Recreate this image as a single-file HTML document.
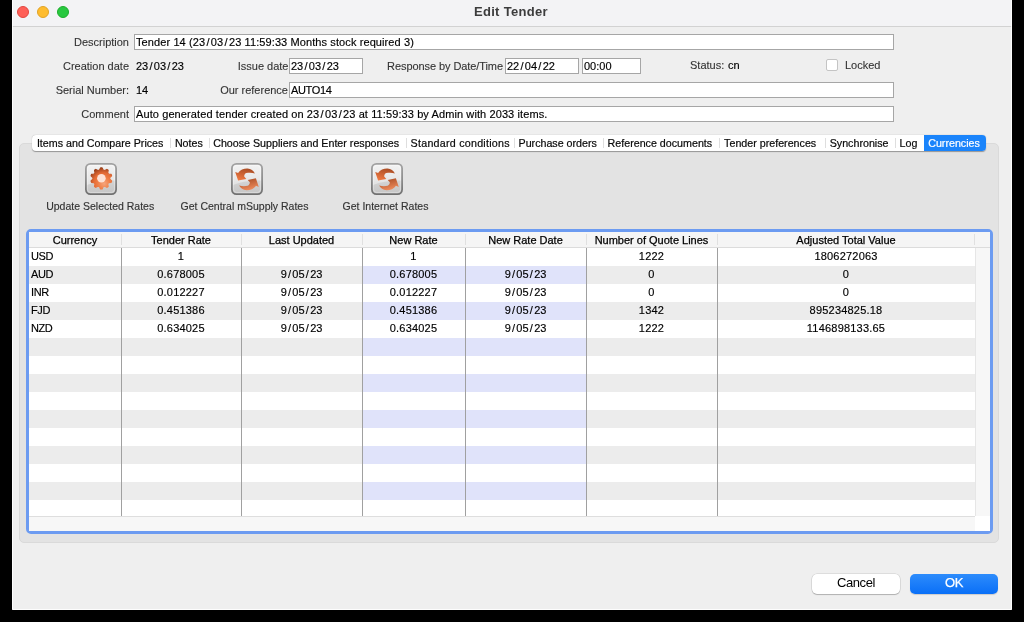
<!DOCTYPE html>
<html><head><meta charset="utf-8">
<style>
html,body{margin:0;padding:0;width:1024px;height:622px;overflow:hidden;background:#000;}
*{box-sizing:border-box;}
body{font-family:"Liberation Sans",sans-serif;font-size:11px;color:#000;position:relative;}
.a{position:absolute;white-space:nowrap;}
#win{position:absolute;left:12px;top:0;width:1000px;height:610px;background:#efefef;border-radius:0 0 1px 1px;}
#title{position:absolute;left:12px;top:0;width:1000px;height:27px;background:#f3f3f5;border-bottom:1px solid #d2d2d2;}
.dot{position:absolute;top:6px;width:12px;height:12px;border-radius:50%;}
.lbl{position:absolute;white-space:nowrap;color:#333;line-height:14px;-webkit-text-stroke:0.1px #333;}
.inp{position:absolute;height:16px;background:#fff;border:1px solid #a6a6a6;}
.itx{position:absolute;white-space:nowrap;color:#000;line-height:14px;-webkit-text-stroke:0.15px #000;}
.sep{position:absolute;top:138px;width:1px;height:10px;background:#dedede;}
.tt{position:absolute;white-space:nowrap;top:136px;line-height:14px;color:#1a1a1a;font-size:10.7px;-webkit-text-stroke:0.2px currentColor;}
.row{position:absolute;left:29px;width:946px;height:18px;}
.vl{position:absolute;top:248px;width:1px;height:268px;background:#a0a0a0;}
.hs{position:absolute;top:234px;width:1px;height:11px;background:#e0e0e0;}
.hd{position:absolute;top:233px;line-height:14px;color:#000;white-space:nowrap;-webkit-text-stroke:0.25px #000;}
.cell{position:absolute;line-height:14px;color:#000;white-space:nowrap;-webkit-text-stroke:0.15px #000;}
.btn{position:absolute;width:32px;height:32px;border-radius:4px;}
.bl{position:absolute;top:199px;line-height:14px;color:#333;white-space:nowrap;font-size:10.5px;-webkit-text-stroke:0.15px #333;}
</style></head>
<body>
<div id="wrap" style="position:absolute;left:0;top:0;width:1024px;height:622px;will-change:transform;">
<div id="win"></div>
<div id="title"></div>
<div class="dot" style="left:17px;background:#fe5f57;border:1px solid #e2463f;"></div>
<div class="dot" style="left:37px;background:#febc2e;border:1px solid #e1a325;"></div>
<div class="dot" style="left:57px;background:#28c840;border:1px solid #1dad2b;"></div>
<div class="a" style="left:474px;top:4px;font-size:13px;line-height:15px;font-weight:bold;color:#3c3c3c;letter-spacing:0.3px;">Edit Tender</div>
<div class="lbl" style="right:895px;top:35px;">Description</div>
<div class="inp" style="left:134px;top:34px;width:760px;height:16px;"></div>
<div class="itx" style="left:136px;top:35px;letter-spacing:0.1px;">Tender 14 (23<span style="margin:0 1.25px">/</span>03<span style="margin:0 1.25px">/</span>23 11:59:33 Months stock required 3)</div>
<div class="lbl" style="right:895px;top:59px;">Creation date</div>
<div class="itx" style="left:136px;top:59px;">23<span style="margin:0 1.25px">/</span>03<span style="margin:0 1.25px">/</span>23</div>
<div class="lbl" style="right:735.5px;top:59px;">Issue date</div>
<div class="inp" style="left:289px;top:58px;width:74px;height:16px;"></div>
<div class="itx" style="left:291px;top:59px;">23<span style="margin:0 1.25px">/</span>03<span style="margin:0 1.25px">/</span>23</div>
<div class="lbl" style="right:521px;top:59px;letter-spacing:-0.08px;">Response by Date/Time</div>
<div class="inp" style="left:505px;top:58px;width:74px;height:16px;"></div>
<div class="itx" style="left:507px;top:59px;">22<span style="margin:0 1.25px">/</span>04<span style="margin:0 1.25px">/</span>22</div>
<div class="inp" style="left:582px;top:58px;width:59px;height:16px;"></div>
<div class="itx" style="left:584px;top:59px;">00:00</div>
<div class="lbl" style="left:690px;top:58px;">Status:</div>
<div class="itx" style="left:728px;top:58px;">cn</div>
<div class="a" style="left:826px;top:59px;width:12px;height:12px;background:#fff;border:1px solid #c4c4c4;border-radius:2px;"></div>
<div class="lbl" style="left:845px;top:58px;">Locked</div>
<div class="lbl" style="right:895px;top:83px;">Serial Number:</div>
<div class="itx" style="left:136px;top:83px;">14</div>
<div class="lbl" style="right:736px;top:83px;">Our reference</div>
<div class="inp" style="left:289px;top:82px;width:605px;height:16px;"></div>
<div class="itx" style="left:291px;top:83px;letter-spacing:-0.35px;">AUTO14</div>
<div class="lbl" style="right:895px;top:107px;">Comment</div>
<div class="inp" style="left:134px;top:106px;width:760px;height:16px;"></div>
<div class="itx" style="left:136px;top:107px;letter-spacing:0.1px;">Auto generated tender created on 23<span style="margin:0 1.25px">/</span>03<span style="margin:0 1.25px">/</span>23 at 11:59:33 by Admin with 2033 items.</div>
<div class="a" style="left:19px;top:143px;width:980px;height:400px;background:#e3e3e3;border:1px solid #dadada;border-radius:5px;"></div>
<div class="a" style="left:32px;top:135px;width:954px;height:16px;background:#fff;border-radius:4px;box-shadow:0 0.5px 1px rgba(0,0,0,0.35);"></div>
<div class="a" style="left:924px;top:135px;width:62px;height:16px;background:#1a84fb;border-radius:0 4px 4px 0;"></div>
<div class="tt" style="left:36.9px;color:#0a0a0a;">Items and Compare Prices</div>
<div class="sep" style="left:170px;"></div>
<div class="tt" style="left:174.9px;color:#0a0a0a;">Notes</div>
<div class="sep" style="left:209px;"></div>
<div class="tt" style="left:213.2px;color:#0a0a0a;">Choose Suppliers and Enter responses</div>
<div class="sep" style="left:406px;"></div>
<div class="tt" style="left:410.6px;color:#0a0a0a;letter-spacing:0.25px;">Standard conditions</div>
<div class="sep" style="left:514px;"></div>
<div class="tt" style="left:518.5px;color:#0a0a0a;">Purchase orders</div>
<div class="sep" style="left:603px;"></div>
<div class="tt" style="left:607.6px;color:#0a0a0a;">Reference documents</div>
<div class="sep" style="left:719px;"></div>
<div class="tt" style="left:724.1px;color:#0a0a0a;">Tender preferences</div>
<div class="sep" style="left:825px;"></div>
<div class="tt" style="left:829.7px;color:#0a0a0a;">Synchronise</div>
<div class="sep" style="left:895px;"></div>
<div class="tt" style="left:899.5px;color:#0a0a0a;">Log</div>
<div class="tt" style="left:928.2px;color:#fff;">Currencies</div>
<svg width="0" height="0" style="position:absolute"><defs>
<linearGradient id="bb" x1="0" y1="0" x2="0" y2="1"><stop offset="0" stop-color="#a2a2a2"/><stop offset="0.5" stop-color="#8e8e8e"/><stop offset="1" stop-color="#707070"/></linearGradient>
<linearGradient id="bf" x1="0" y1="0" x2="0" y2="1"><stop offset="0" stop-color="#f3f3f3"/><stop offset="0.5" stop-color="#e8e8e8"/><stop offset="1" stop-color="#d6d6d6"/></linearGradient>
<radialGradient id="og" cx="0.58" cy="0.68" r="0.68" fx="0.62" fy="0.72"><stop offset="0" stop-color="#f6a57c"/><stop offset="0.35" stop-color="#f08048"/><stop offset="0.62" stop-color="#e46b35"/><stop offset="0.82" stop-color="#b65025"/><stop offset="1" stop-color="#883513"/></radialGradient>
<linearGradient id="ag" x1="0.7" y1="0" x2="0.3" y2="1"><stop offset="0" stop-color="#a84c24"/><stop offset="1" stop-color="#f17a42"/></linearGradient><linearGradient id="ag2" x1="0.3" y1="0" x2="0.7" y2="1"><stop offset="0" stop-color="#a84c24"/><stop offset="1" stop-color="#f39060"/></linearGradient>
</defs></svg>
<div class="btn" style="left:85px;top:163px;"><svg width="32" height="32" viewBox="0 0 32 32" style="position:absolute;left:0;top:0"><rect x="0.9" y="0.9" width="30.2" height="30.2" rx="4.5" fill="url(#bf)" stroke="url(#bb)" stroke-width="1.8"/><path d="M2,22 Q14,17 30,17.5 L30,27 Q30,30 27,30 L5,30 Q2,30 2,27Z" fill="#000" opacity="0.08"/><rect x="2.5" y="2.5" width="27" height="27" rx="3" fill="none" stroke="#fff" stroke-opacity="0.3" stroke-width="1"/><defs><mask id="gm" maskUnits="userSpaceOnUse" x="-14" y="-14" width="28" height="28"><path d="M-2.56,-7.89 L-1.77,-8.31 L-0.73,-10.47 L0.73,-10.47 L1.77,-8.31 L2.56,-7.89 L3.46,-7.77 L5.56,-8.90 L6.75,-8.04 L6.32,-5.69 L6.71,-4.88 L7.36,-4.25 L9.74,-3.93 L10.19,-2.54 L8.45,-0.89 L8.30,-0.00 L8.45,0.89 L10.19,2.54 L9.74,3.93 L7.36,4.25 L6.71,4.88 L6.32,5.69 L6.75,8.04 L5.56,8.90 L3.46,7.77 L2.56,7.89 L1.77,8.31 L0.73,10.47 L-0.73,10.47 L-1.77,8.31 L-2.56,7.89 L-3.46,7.77 L-5.56,8.90 L-6.75,8.04 L-6.32,5.69 L-6.71,4.88 L-7.36,4.25 L-9.74,3.93 L-10.19,2.54 L-8.45,0.89 L-8.30,0.00 L-8.45,-0.89 L-10.19,-2.54 L-9.74,-3.93 L-7.36,-4.25 L-6.71,-4.88 L-6.32,-5.69 L-6.75,-8.04 L-5.56,-8.90 L-3.46,-7.77Z" fill="#fff" stroke="#fff" stroke-width="1.3" stroke-linejoin="round"/></mask></defs><g transform="translate(16.35,15.4)"><rect x="-12" y="-12" width="24" height="24" fill="url(#og)" mask="url(#gm)"/><circle cx="0.05" cy="-0.1" r="4.3" fill="#fde2d6"/></g></svg></div>
<div class="bl" style="left:0.20000000000000284px;width:200px;text-align:center;">Update Selected Rates</div>
<div class="btn" style="left:231px;top:163px;"><svg width="32" height="32" viewBox="0 0 32 32" style="position:absolute;left:0;top:0"><rect x="0.9" y="0.9" width="30.2" height="30.2" rx="4.5" fill="url(#bf)" stroke="url(#bb)" stroke-width="1.8"/><path d="M2,22 Q14,17 30,17.5 L30,27 Q30,30 27,30 L5,30 Q2,30 2,27Z" fill="#000" opacity="0.08"/><rect x="2.5" y="2.5" width="27" height="27" rx="3" fill="none" stroke="#fff" stroke-opacity="0.3" stroke-width="1"/><g transform="translate(16,16.4)"><path d="M-8.9,1.1 L-11.8,-7.5 L-8.9,-6.3 C-7,-9.5 -3,-10.9 0.5,-10.8 C4,-10.7 6.5,-8.5 7.9,-6.0 C5,-7 1.5,-6.9 -0.7,-6.3 C-2.2,-5.8 -2.9,-4.2 -2.8,-2.9 L-0.7,-0.5 Z" fill="url(#ag)"/><path d="M8.90,-1.10 L11.80,7.50 L8.90,6.30 C7.00,9.50 3.00,10.90 -0.50,10.80 C-4.00,10.70 -6.50,8.50 -7.90,6.00 C-5.00,7.00 -1.50,6.90 0.70,6.30 C2.20,5.80 2.90,4.20 2.80,2.90 L0.70,0.50 Z" fill="url(#ag2)"/></g></svg></div>
<div class="bl" style="left:144.5px;width:200px;text-align:center;">Get Central mSupply Rates</div>
<div class="btn" style="left:371px;top:163px;"><svg width="32" height="32" viewBox="0 0 32 32" style="position:absolute;left:0;top:0"><rect x="0.9" y="0.9" width="30.2" height="30.2" rx="4.5" fill="url(#bf)" stroke="url(#bb)" stroke-width="1.8"/><path d="M2,22 Q14,17 30,17.5 L30,27 Q30,30 27,30 L5,30 Q2,30 2,27Z" fill="#000" opacity="0.08"/><rect x="2.5" y="2.5" width="27" height="27" rx="3" fill="none" stroke="#fff" stroke-opacity="0.3" stroke-width="1"/><g transform="translate(16,16.4)"><path d="M-8.9,1.1 L-11.8,-7.5 L-8.9,-6.3 C-7,-9.5 -3,-10.9 0.5,-10.8 C4,-10.7 6.5,-8.5 7.9,-6.0 C5,-7 1.5,-6.9 -0.7,-6.3 C-2.2,-5.8 -2.9,-4.2 -2.8,-2.9 L-0.7,-0.5 Z" fill="url(#ag)"/><path d="M8.90,-1.10 L11.80,7.50 L8.90,6.30 C7.00,9.50 3.00,10.90 -0.50,10.80 C-4.00,10.70 -6.50,8.50 -7.90,6.00 C-5.00,7.00 -1.50,6.90 0.70,6.30 C2.20,5.80 2.90,4.20 2.80,2.90 L0.70,0.50 Z" fill="url(#ag2)"/></g></svg></div>
<div class="bl" style="left:285.5px;width:200px;text-align:center;">Get Internet Rates</div>
<div class="a" style="left:26px;top:229px;width:967px;height:305px;border:3px solid #6c9bf1;border-radius:5px;background:#fff;"></div>
<div class="a" style="left:29px;top:232px;width:961px;height:15px;background:#f5f5f5;"></div>
<div class="a" style="left:29px;top:247px;width:961px;height:1px;background:#dcdcdc;"></div>
<div class="row" style="top:248px;height:18px;background:#ffffff;"></div>
<div class="row" style="top:266px;height:18px;background:#ececec;"></div>
<div class="a" style="left:363px;top:266px;width:223px;height:18px;background:#e0e3fa;"></div>
<div class="row" style="top:284px;height:18px;background:#ffffff;"></div>
<div class="row" style="top:302px;height:18px;background:#ececec;"></div>
<div class="a" style="left:363px;top:302px;width:223px;height:18px;background:#e0e3fa;"></div>
<div class="row" style="top:320px;height:18px;background:#ffffff;"></div>
<div class="row" style="top:338px;height:18px;background:#ececec;"></div>
<div class="a" style="left:363px;top:338px;width:223px;height:18px;background:#e0e3fa;"></div>
<div class="row" style="top:356px;height:18px;background:#ffffff;"></div>
<div class="row" style="top:374px;height:18px;background:#ececec;"></div>
<div class="a" style="left:363px;top:374px;width:223px;height:18px;background:#e0e3fa;"></div>
<div class="row" style="top:392px;height:18px;background:#ffffff;"></div>
<div class="row" style="top:410px;height:18px;background:#ececec;"></div>
<div class="a" style="left:363px;top:410px;width:223px;height:18px;background:#e0e3fa;"></div>
<div class="row" style="top:428px;height:18px;background:#ffffff;"></div>
<div class="row" style="top:446px;height:18px;background:#ececec;"></div>
<div class="a" style="left:363px;top:446px;width:223px;height:18px;background:#e0e3fa;"></div>
<div class="row" style="top:464px;height:18px;background:#ffffff;"></div>
<div class="row" style="top:482px;height:18px;background:#ececec;"></div>
<div class="a" style="left:363px;top:482px;width:223px;height:18px;background:#e0e3fa;"></div>
<div class="row" style="top:500px;height:16px;background:#ffffff;"></div>
<div class="a" style="left:975px;top:248px;width:15px;height:268px;background:#f7f7f7;border-left:1px solid #e6e6e6;"></div>
<div class="a" style="left:29px;top:516px;width:946px;height:15px;background:#f7f7f7;border-top:1px solid #dedede;"></div>
<div class="a" style="left:975px;top:516px;width:15px;height:15px;background:#fff;"></div>
<div class="vl" style="left:121px;"></div>
<div class="vl" style="left:241px;"></div>
<div class="vl" style="left:362px;"></div>
<div class="vl" style="left:465px;"></div>
<div class="vl" style="left:586px;"></div>
<div class="vl" style="left:717px;"></div>
<div class="hs" style="left:121px;"></div>
<div class="hs" style="left:241px;"></div>
<div class="hs" style="left:362px;"></div>
<div class="hs" style="left:465px;"></div>
<div class="hs" style="left:586px;"></div>
<div class="hs" style="left:717px;"></div>
<div class="hs" style="left:974px;"></div>
<div class="hd" style="left:29px;width:92px;text-align:center;">Currency</div>
<div class="hd" style="left:121px;width:120px;text-align:center;">Tender Rate</div>
<div class="hd" style="left:241px;width:121px;text-align:center;">Last Updated</div>
<div class="hd" style="left:362px;width:103px;text-align:center;">New Rate</div>
<div class="hd" style="left:465px;width:121px;text-align:center;">New Rate Date</div>
<div class="hd" style="left:586px;width:131px;text-align:center;">Number of Quote Lines</div>
<div class="hd" style="left:717px;width:258px;text-align:center;">Adjusted Total Value</div>
<div class="cell" style="left:31px;top:249px;letter-spacing:-0.4px;">USD</div>
<div class="cell" style="left:121px;width:120px;top:249px;text-align:center;letter-spacing:0.2px;">1</div>
<div class="cell" style="left:362px;width:103px;top:249px;text-align:center;letter-spacing:0.2px;">1</div>
<div class="cell" style="left:586px;width:131px;top:249px;text-align:center;letter-spacing:0.2px;">1222</div>
<div class="cell" style="left:717px;width:258px;top:249px;text-align:center;letter-spacing:0.2px;">1806272063</div>
<div class="cell" style="left:31px;top:267px;letter-spacing:-0.4px;">AUD</div>
<div class="cell" style="left:121px;width:120px;top:267px;text-align:center;letter-spacing:0.2px;">0.678005</div>
<div class="cell" style="left:241px;width:121px;top:267px;text-align:center;">9<span style="margin:0 1.25px">/</span>05<span style="margin:0 1.25px">/</span>23</div>
<div class="cell" style="left:362px;width:103px;top:267px;text-align:center;letter-spacing:0.2px;">0.678005</div>
<div class="cell" style="left:465px;width:121px;top:267px;text-align:center;">9<span style="margin:0 1.25px">/</span>05<span style="margin:0 1.25px">/</span>23</div>
<div class="cell" style="left:586px;width:131px;top:267px;text-align:center;letter-spacing:0.2px;">0</div>
<div class="cell" style="left:717px;width:258px;top:267px;text-align:center;letter-spacing:0.2px;">0</div>
<div class="cell" style="left:31px;top:285px;letter-spacing:-0.4px;">INR</div>
<div class="cell" style="left:121px;width:120px;top:285px;text-align:center;letter-spacing:0.2px;">0.012227</div>
<div class="cell" style="left:241px;width:121px;top:285px;text-align:center;">9<span style="margin:0 1.25px">/</span>05<span style="margin:0 1.25px">/</span>23</div>
<div class="cell" style="left:362px;width:103px;top:285px;text-align:center;letter-spacing:0.2px;">0.012227</div>
<div class="cell" style="left:465px;width:121px;top:285px;text-align:center;">9<span style="margin:0 1.25px">/</span>05<span style="margin:0 1.25px">/</span>23</div>
<div class="cell" style="left:586px;width:131px;top:285px;text-align:center;letter-spacing:0.2px;">0</div>
<div class="cell" style="left:717px;width:258px;top:285px;text-align:center;letter-spacing:0.2px;">0</div>
<div class="cell" style="left:31px;top:303px;letter-spacing:-0.4px;">FJD</div>
<div class="cell" style="left:121px;width:120px;top:303px;text-align:center;letter-spacing:0.2px;">0.451386</div>
<div class="cell" style="left:241px;width:121px;top:303px;text-align:center;">9<span style="margin:0 1.25px">/</span>05<span style="margin:0 1.25px">/</span>23</div>
<div class="cell" style="left:362px;width:103px;top:303px;text-align:center;letter-spacing:0.2px;">0.451386</div>
<div class="cell" style="left:465px;width:121px;top:303px;text-align:center;">9<span style="margin:0 1.25px">/</span>05<span style="margin:0 1.25px">/</span>23</div>
<div class="cell" style="left:586px;width:131px;top:303px;text-align:center;letter-spacing:0.2px;">1342</div>
<div class="cell" style="left:717px;width:258px;top:303px;text-align:center;letter-spacing:0.2px;">895234825.18</div>
<div class="cell" style="left:31px;top:321px;letter-spacing:-0.4px;">NZD</div>
<div class="cell" style="left:121px;width:120px;top:321px;text-align:center;letter-spacing:0.2px;">0.634025</div>
<div class="cell" style="left:241px;width:121px;top:321px;text-align:center;">9<span style="margin:0 1.25px">/</span>05<span style="margin:0 1.25px">/</span>23</div>
<div class="cell" style="left:362px;width:103px;top:321px;text-align:center;letter-spacing:0.2px;">0.634025</div>
<div class="cell" style="left:465px;width:121px;top:321px;text-align:center;">9<span style="margin:0 1.25px">/</span>05<span style="margin:0 1.25px">/</span>23</div>
<div class="cell" style="left:586px;width:131px;top:321px;text-align:center;letter-spacing:0.2px;">1222</div>
<div class="cell" style="left:717px;width:258px;top:321px;text-align:center;letter-spacing:0.2px;">1146898133.65</div>
<div class="a" style="left:812px;top:574px;width:88px;height:20px;background:#fff;border-radius:5px;box-shadow:0 0 0 0.5px rgba(0,0,0,0.15),0 1px 1px rgba(0,0,0,0.2);"></div>
<div class="a" style="left:812px;top:575px;width:88px;text-align:center;font-size:13px;line-height:16px;color:#000;letter-spacing:-0.4px;">Cancel</div>
<div class="a" style="left:910px;top:574px;width:88px;height:20px;background:linear-gradient(#2d8cfc,#0a6ff7);border-radius:5px;box-shadow:0 1px 1px rgba(0,0,0,0.15);"></div>
<div class="a" style="left:910px;top:575px;width:88px;text-align:center;font-size:13px;line-height:16px;color:#fff;letter-spacing:-0.4px;-webkit-text-stroke:0.25px #fff;">OK</div>
<div class="a" style="left:12px;top:0;width:1000px;height:610px;border:1px solid rgba(255,255,255,0.85);border-top:none;border-radius:0 0 1px 1px;"></div>
</div>
</body></html>
